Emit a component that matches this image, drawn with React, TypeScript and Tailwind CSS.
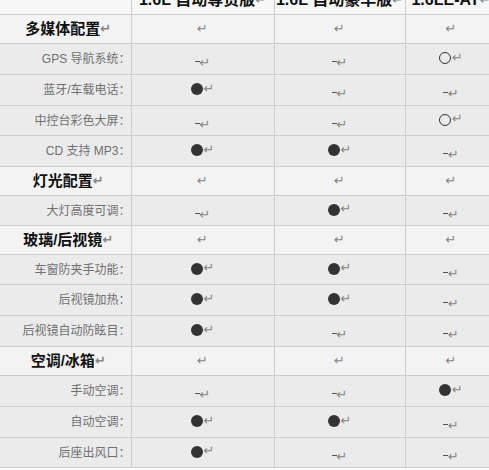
import React from "react";

type Mark = "" | "-" | "d" | "o";
type Row = { label: string; section?: boolean; h: number; c: [Mark, Mark, Mark] };

const rows: Row[] = [
  { label: "多媒体配置", section: true, h: 29, c: ["", "", ""] },
  { label: "GPS 导航系统：", h: 31, c: ["-", "-", "o"] },
  { label: "蓝牙/车载电话：", h: 31, c: ["d", "-", "-"] },
  { label: "中控台彩色大屏：", h: 30, c: ["-", "-", "o"] },
  { label: "CD 支持 MP3：", h: 31, c: ["d", "d", "-"] },
  { label: "灯光配置", section: true, h: 29, c: ["", "", ""] },
  { label: "大灯高度可调：", h: 30, c: ["-", "d", "-"] },
  { label: "玻璃/后视镜", section: true, h: 29, c: ["", "", ""] },
  { label: "车窗防夹手功能：", h: 30, c: ["d", "d", "-"] },
  { label: "后视镜加热：", h: 31, c: ["d", "d", "-"] },
  { label: "后视镜自动防眩目：", h: 31, c: ["d", "-", "-"] },
  { label: "空调/冰箱", section: true, h: 29, c: ["", "", ""] },
  { label: "手动空调：", h: 31, c: ["-", "-", "d"] },
  { label: "自动空调：", h: 31, c: ["d", "d", "-"] },
  { label: "后座出风口：", h: 30, c: ["d", "-", "-"] },
];

const Ret = () => (
  <span className="text-[13px] text-[#858585] leading-none relative -top-[1px]" style={{ fontFamily: '"DejaVu Sans", sans-serif' }}>
    ↵
  </span>
);

function Cell({ m }: { m: Mark }) {
  return (
    <span className="inline-flex items-center">
      {m === "-" && <span className="inline-block w-[5px] h-[1px] bg-[#555] relative -top-[2px]" />}
      {m === "d" && <span className="inline-block w-[12px] h-[12px] rounded-full bg-[#333] mr-[1px]" />}
      {m === "o" && <span className="inline-block w-[12px] h-[12px] rounded-full border border-[#333] mr-[1px]" />}
      <Ret />
    </span>
  );
}

export default function App() {
  const font = { fontFamily: '"Liberation Sans", "Noto Sans CJK SC", sans-serif' };
  return (
    <div className="w-[489px] h-[470px] overflow-hidden bg-white" style={font}>
      <table className="border-collapse table-fixed w-[497px] -mt-[15px]">
        <colgroup>
          <col className="w-[131px]" />
          <col className="w-[143px]" />
          <col className="w-[131px]" />
          <col className="w-[92px]" />
        </colgroup>
        <thead>
          <tr className="h-[29px] bg-[#f7f7f7]">
            <th className="border border-[#cdcdcd] border-l-0" />
            {["1.6L 自动尊贵版", "1.6L 自动豪华版", "1.6LE-AT"].map((t) => (
              <th key={t} className="border border-[#cdcdcd] text-[16px] font-bold text-[#111] text-center whitespace-nowrap">
                {t}
                <Ret />
              </th>
            ))}
          </tr>
        </thead>
        <tbody>
          {rows.map((r, i) => (
            <tr key={i} style={{ height: r.h }} className={r.section ? "bg-[#f3f3f3]" : "bg-[#ebebeb]"}>
              <td
                className={
                  "border border-[#cdcdcd] border-l-0 " +
                  (r.section
                    ? "text-center pl-[6px] text-[15px] font-bold text-[#111]"
                    : "text-right pr-0 text-[12px] text-[#707070]")
                }
              >
                {r.label}
                {r.section && <Ret />}
              </td>
              <td className="border border-[#cdcdcd] text-center">
                <Cell m={r.c[0]} />
              </td>
              <td className="border border-[#cdcdcd] text-center">
                <Cell m={r.c[1]} />
              </td>
              <td className="border border-[#cdcdcd] text-center">
                <Cell m={r.c[2]} />
              </td>
            </tr>
          ))}
        </tbody>
      </table>
    </div>
  );
}
